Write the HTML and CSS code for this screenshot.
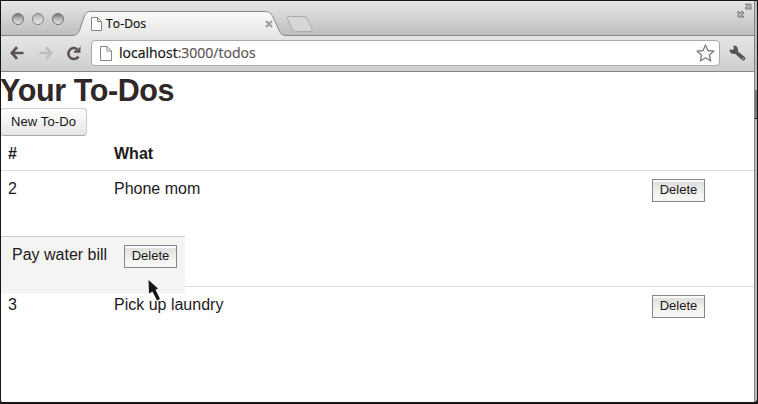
FILE: index.html
```
<!DOCTYPE html>
<html lang="en">
<head>
<meta charset="utf-8">
<title>To-Dos</title>
<link rel="stylesheet" href="styles.css">
</head>
<body>
<div class="window">
  <header class="tabstrip">
    <div class="lights"><i></i><i></i><i></i></div>
    <div class="tab">
      <svg class="tab-shape" width="218" height="26" viewBox="0 0 218 26">
        <defs><linearGradient id="tabfill" x2="0" y2="1"><stop offset="0" stop-color="#f9f9f8"/><stop offset="1" stop-color="#e6e6e5"/></linearGradient></defs>
        <path d="M0 26V24.500C5 24.500 6.500 22 8 18L12 6C13.500 2 15 .5 19 .5H193C197 .5 199 2 201 6L207 19C209 23 210 24.500 215 24.500H218V26Z" fill="url(#tabfill)"/>
        <path d="M0 24.500C5 24.500 6.500 22 8 18L12 6C13.500 2 15 .5 19 .5H193C197 .5 199 2 201 6L207 19C209 23 210 24.500 215 24.500H218" fill="none" stroke="#858585"/>
      </svg>
      <svg class="page-icon" width="11" height="14" viewBox="0 0 11 14"><path d="M.5.5H6.500L10.500 4.500V13.500H.5ZM6.500.5V4.500H10.500" fill="#fff" stroke="#85858a"/></svg>
      <span class="tab-title">To-Dos</span>
      <svg class="tab-close" width="8" height="8" viewBox="0 0 8 8"><path d="M1 1L7 7M7 1L1 7" stroke="#a09e9e" stroke-width="2.200"/></svg>
    </div>
    <svg class="new-tab" width="28" height="17" viewBox="0 0 28 17"><path d="M3 .5H18Q20.500.5 21.500 3L26 13Q27 15.500 25 15.500H9.500Q7 15.500 6 13L1.500 3Q.5.5 3 .5Z" fill="#d6d6d6" stroke="#aaa"/></svg>
    <svg class="expand" width="15" height="15" viewBox="0 0 15 15" fill="#b0b0b3" stroke="#77777c" stroke-width=".9"><path d="M8 1H14V7L12 5L10 7L8 5L10 3ZM1 8L3 10L5 8L7 10L5 12L7 14H1Z"/></svg>
  </header>
  <nav class="toolbar">
    <svg class="back" width="14" height="14" viewBox="0 0 14 14"><path d="M7 1.200L1.800 7L7 12.800M2 7H13.500" fill="none" stroke="#5b5052" stroke-width="2.700"/></svg>
    <svg class="forward" width="14" height="14" viewBox="0 0 14 14"><path d="M7 1.200L12.200 7L7 12.800M12 7H.5" fill="none" stroke="#bdbdbd" stroke-width="2.500"/></svg>
    <svg class="reload" width="15" height="15" viewBox="0 0 15 15"><path d="M12.500 10.500A5.500 5.500 0 1 1 11.500 3.500" fill="none" stroke="#5b5052" stroke-width="2.500"/><path d="M14.500 0V6.800H8V5L12 3.500Z" fill="#5b5052"/></svg>
    <div class="address">
      <svg width="12" height="15" viewBox="0 0 12 15"><path d="M.5.5H7L11.500 5V14.500H.5ZM7 .5V5H11.500" fill="#fff" stroke="#85858a"/></svg>
      <span class="url"><b>localhost</b>:3000/todos</span>
      <svg class="star" width="19" height="18" viewBox="0 0 19 18"><path d="M9.500 1L11.900 6.500L18 7.100L13.400 11L14.700 17L9.500 13.800L4.300 17L5.600 11L1 7.100L7.100 6.500Z" fill="#fff" stroke="#7c7c80" stroke-width="1.300" stroke-linejoin="round"/></svg>
    </div>
    <svg class="wrench" width="17" height="16" viewBox="0 0 17 16"><path d="M4.500.5L4.800 3.800L3.500 5L.7 4.300C0 7.500 3 9.700 6.200 8.700L13 15Q14.500 16 15.800 14.700Q17 13.200 15.700 12L9 6.500C9.500 3 7.500 0 4.500.5Z" fill="#5b5052"/><circle cx="14" cy="13.400" r=".7" fill="#ddd"/></svg>
  </nav>
  <main class="page">
    <h1>Your To-Dos</h1>
    <button class="new">New To-Do</button>
    <div class="row head"><span>#</span><span>What</span></div>
    <div class="row"><span>2</span><span>Phone mom</span><button class="delete">Delete</button></div>
    <div class="row"><span>3</span><span>Pick up laundry</span><button class="delete">Delete</button></div>
    <div class="dragged"><span>Pay water bill</span><button class="delete">Delete</button></div>
    <svg class="pointer" width="14" height="23" viewBox="0 0 14 23"><path d="M1.500 1L11 9.500L8.500 10.800L13 20L10 21.500L5.500 12.500L2 14.500Z" fill="#151515"/></svg>
  </main>
  <i class="scroll-mark"></i>
</div>
</body>
</html>
```
FILE: styles.css
```
* { box-sizing: border-box; }
body { margin: 0; background: #181416; }
.window {
  position: relative;
  width: 757px;
  height: 402px;
  border: 1px solid #181416;
  border-width: 1px 0 0 1px;
  background: #fff;
  font-family: "Liberation Sans", Arial, sans-serif;
  color: #1c1a1b;
  overflow: hidden;
  border-radius: 0 0 4px 2px;
}
.window::after {
  content: "";
  position: absolute;
  inset: 0 0 0 auto;
  width: 2px;
  border-left: 1px solid #858585;
  background: #b9b9b9;
}
.tabstrip {
  display: flex;
  height: 35px;
  background: linear-gradient(#e8e7e8, #bebebd);
  border-bottom: 1px solid #858585;
}
.lights { display: flex; gap: 8px; padding: 12px 0 0 11px; width: 71px; }
.lights i {
  width: 12px;
  height: 12px;
  border: 1px solid #77696c;
  border-radius: 50%;
  background: linear-gradient(#77727a, #b8b8ba 50%, #e5e5e5);
}
.lights i:nth-child(2) { border-color: #858585; background: linear-gradient(#aaa, #d0d0d0 45%, #e5e5e5); }
.tab { position: relative; display: flex; width: 218px; height: 26px; margin-top: 10px; padding-left: 19px; }
.tab > * { position: relative; flex: none; }
.tab .tab-shape { position: absolute; left: 0; top: 0; }
.page-icon { margin-top: 6px; }
.tab-title { margin: 5px 0 0 4px; width: 159px; font: 12px/16px "Open Sans", sans-serif; color: #111; letter-spacing: .15px; -webkit-text-stroke: .2px #111; }
.tab-close { margin-top: 9px; }
.new-tab { margin: 15px 0 0 -4px; }
.expand { margin: 2px 5px 0 auto; }
.toolbar {
  display: flex;
  align-items: center;
  height: 36px;
  padding: 0 10px 1px 9px;
  background: linear-gradient(#e6e6e5, #cecece);
  border-bottom: 1px solid #858585;
}
.forward { margin-left: 15px; }
.reload { margin-left: 13px; }
.address {
  display: flex;
  align-items: center;
  width: 629px;
  height: 26px;
  margin-left: 10px;
  padding: 0 4px 0 8px;
  border: 1px solid #aaa;
  border-radius: 4px;
  background: #fff;
}
.url { margin-left: 7px; font: 14px/20px "Open Sans", sans-serif; color: #5b5355; letter-spacing: 0; -webkit-text-stroke: .2px; }
.url b { font-weight: 400; color: #111; }
.star { margin-left: auto; }
.wrench { margin-left: 9px; }
.page { position: relative; }
h1 { margin: 0; height: 36px; font-size: 30.500px; line-height: 36px; letter-spacing: -.4px; text-indent: -1px; color: #302729; }
button { display: block; font-family: inherit; color: #181617; text-align: center; white-space: nowrap; }
.new {
  width: 87px;
  height: 28px;
  margin-left: -1px;
  padding: 0 0 1px;
  border: 1px solid #ccc;
  border-bottom-color: #aaa;
  border-radius: 4px;
  background: linear-gradient(#fff, #e5e5e4);
  font-size: 13px;
  letter-spacing: .1px;
}
.row {
  display: grid;
  grid-template-columns: 106px 538px auto;
  justify-content: start;
  align-items: start;
  height: 116px;
  padding: 8px 0 0 7px;
  border-top: 1px solid #ddd;
  font-size: 16px;
  line-height: 20px;
}
.row.head { height: 34px; border: 0; font-weight: 700; }
.delete {
  width: 53px;
  height: 23px;
  padding: 0 0 2px;
  border: 1px solid #85858a;
  background: linear-gradient(#fafafa 0 10%, #dfdfde 12%, #f5f5f4 70%);
  font-size: 13px;
}
.dragged {
  position: absolute;
  left: 0;
  top: 164px;
  display: flex;
  gap: 15px;
  width: 184px;
  height: 58px;
  padding: 8px 0 0 11px;
  border-top: 1px solid #ccc;
  background: #f4f4f3;
  font-size: 16px;
  line-height: 20px;
}
.dragged span { width: 97px; white-space: nowrap; }
.pointer { position: absolute; left: 146px; top: 207px; }
.scroll-mark { position: absolute; right: 0; top: 89px; z-index: 1; width: 2px; height: 29px; background: #77787a; border-bottom: 1px solid #181416; }
```
